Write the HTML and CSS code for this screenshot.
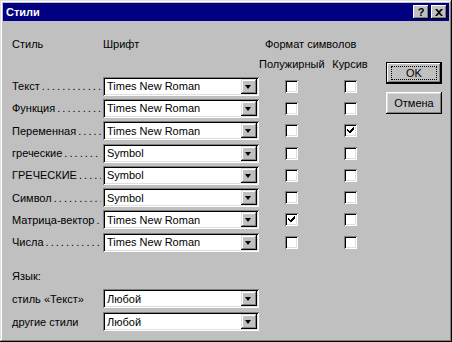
FILE: index.html
```html
<!DOCTYPE html>
<html lang="ru">
<head>
    <meta charset="UTF-8">
    <title>Стили</title>
    <link rel="stylesheet" href="styles.css">
</head>
<body>
<div class="window">
    <div class="titlebar">
        <span class="title">Стили</span>
        <div class="tbtns">
            <span class="tbtn help">?</span>
            <span class="tbtn close">
                <svg width="8" height="7" viewBox="0 0 8 7"><path d="M0 0h2l2 2 2-2h2L5 3.5 8 7H6L4 5 2 7H0l3-3.5z" fill="#000"/></svg>
            </span>
        </div>
    </div>

    <div class="content">
        <div class="form">
            <div class="grid">
                <div class="hd">Стиль</div>
                <div class="hd">Шрифт</div>
                <div class="hd fmt">Формат символов</div>

                <div></div><div></div>
                <div class="hd2">Полужирный</div>
                <div class="hd2">Курсив</div>

                <div class="lbl"><span>Текст</span><span class="dots"></span></div>
                <div class="combo"><span class="val">Times New Roman</span><span class="drop"></span></div>
                <div class="cell"><span class="chk"></span></div>
                <div class="cell"><span class="chk"></span></div>

                <div class="lbl"><span>Функция</span><span class="dots"></span></div>
                <div class="combo"><span class="val">Times New Roman</span><span class="drop"></span></div>
                <div class="cell"><span class="chk"></span></div>
                <div class="cell"><span class="chk"></span></div>

                <div class="lbl"><span>Переменная</span><span class="dots"></span></div>
                <div class="combo"><span class="val">Times New Roman</span><span class="drop"></span></div>
                <div class="cell"><span class="chk"></span></div>
                <div class="cell"><span class="chk on"></span></div>

                <div class="lbl"><span>греческие</span><span class="dots"></span></div>
                <div class="combo"><span class="val">Symbol</span><span class="drop"></span></div>
                <div class="cell"><span class="chk"></span></div>
                <div class="cell"><span class="chk"></span></div>

                <div class="lbl"><span>ГРЕЧЕСКИЕ</span><span class="dots"></span></div>
                <div class="combo"><span class="val">Symbol</span><span class="drop"></span></div>
                <div class="cell"><span class="chk"></span></div>
                <div class="cell"><span class="chk"></span></div>

                <div class="lbl"><span>Символ</span><span class="dots"></span></div>
                <div class="combo"><span class="val">Symbol</span><span class="drop"></span></div>
                <div class="cell"><span class="chk"></span></div>
                <div class="cell"><span class="chk"></span></div>

                <div class="lbl"><span>Матрица-вектор</span><span class="dots"></span></div>
                <div class="combo"><span class="val">Times New Roman</span><span class="drop"></span></div>
                <div class="cell"><span class="chk on"></span></div>
                <div class="cell"><span class="chk"></span></div>

                <div class="lbl"><span>Числа</span><span class="dots"></span></div>
                <div class="combo"><span class="val">Times New Roman</span><span class="drop"></span></div>
                <div class="cell"><span class="chk"></span></div>
                <div class="cell"><span class="chk"></span></div>
            </div>

            <div class="lang">
                <div class="hd lang-title">Язык:</div>
                <div class="lang-row">
                    <div class="lbl2">стиль «Текст»</div>
                    <div class="combo"><span class="val">Любой</span><span class="drop"></span></div>
                </div>
                <div class="lang-row">
                    <div class="lbl2">другие стили</div>
                    <div class="combo"><span class="val">Любой</span><span class="drop"></span></div>
                </div>
            </div>
        </div>

        <div class="buttons">
            <div class="btn default"><span class="focus">OK</span></div>
            <div class="btn">Отмена</div>
        </div>
    </div>
</div>
</body>
</html>
```

FILE: styles.css
```css
    body {
        margin: 0;
        background: #c0c0c0;
        font-family: "Liberation Sans", Arial, sans-serif;
        font-size: 11px;
        color: #000;
    }

    .window {
        width: 452px;
        height: 342px;
        box-sizing: border-box;
        background: #c0c0c0;
        padding: 3px;
        box-shadow: inset -1px -1px #000, inset 1px 1px #dfdfdf, inset -2px -2px #808080, inset 2px 2px #fff;
    }

    .titlebar {
        height: 18px;
        background: #000080;
        display: flex;
        align-items: center;
        justify-content: space-between;
        padding: 0 2px 0 3px;
    }

    .title {
        color: #fff;
        font-weight: bold;
        font-size: 11px;
    }

    .tbtns {
        display: flex;
        gap: 2px;
    }

    .tbtn {
        width: 16px;
        height: 14px;
        box-sizing: border-box;
        background: #c0c0c0;
        box-shadow: inset -1px -1px #000, inset 1px 1px #fff, inset -2px -2px #808080;
        display: flex;
        align-items: center;
        justify-content: center;
        font-weight: bold;
        font-size: 11px;
        line-height: 1;
    }

    .content {
        display: flex;
        padding: 15px 0 0 9px;
    }

    .form {
        width: 374px;
    }

    .grid {
        display: grid;
        grid-template-columns: 91px 156px 64px 54px;
        grid-auto-rows: 22.3px;
        grid-template-rows: 18px 21px;
        align-items: center;
    }

    .hd {
        align-self: start;
        padding-top: 2px;
    }

    .fmt {
        grid-column: 3 / span 2;
        padding-left: 6px;
    }

    .hd2 {
        text-align: center;
        align-self: start;
        padding-top: 4px;
    }

    .lbl {
        display: flex;
        overflow: hidden;
        white-space: nowrap;
        padding-right: 2px;
    }

    .dots {
        flex: 1;
        overflow: hidden;
        margin-left: 2px;
    }

    .dots::after {
        content: ". . . . . . . . . . . . . . . . . . . . . . . .";
        letter-spacing: -0.5px;
    }

    .combo {
        height: 19px;
        box-sizing: border-box;
        background: #fff;
        box-shadow: inset 1px 1px #808080, inset -1px -1px #fff, inset 2px 2px #000, inset -2px -2px #dfdfdf;
        display: flex;
        align-items: center;
        padding: 2px;
        width: 156px;
    }

    .val {
        flex: 1;
        padding-left: 2px;
        font-size: 11px;
    }

    .drop {
        width: 16px;
        height: 15px;
        box-sizing: border-box;
        background: #c0c0c0;
        box-shadow: inset -1px -1px #000, inset 1px 1px #dfdfdf, inset -2px -2px #808080, inset 2px 2px #fff;
        position: relative;
    }

    .drop::after {
        content: "";
        position: absolute;
        left: 4px;
        top: 6px;
        border-left: 3.5px solid transparent;
        border-right: 3.5px solid transparent;
        border-top: 4px solid #000;
    }

    .cell {
        display: flex;
        justify-content: center;
    }

    .chk {
        width: 13px;
        height: 13px;
        box-sizing: border-box;
        background: #fff;
        box-shadow: inset 1px 1px #808080, inset -1px -1px #fff, inset 2px 2px #000, inset -2px -2px #dfdfdf;
        position: relative;
    }

    .chk.on::after {
        content: "";
        position: absolute;
        left: 3px;
        top: 3px;
        width: 7px;
        height: 6px;
        background: no-repeat url("data:image/svg+xml;utf8,<svg xmlns='http://www.w3.org/2000/svg' width='7' height='6'><path d='M0 2h1v1h1v1h1V3h1V2h1V1h1V0h1v3H6v1H5v1H4v1H2V5H1V4H0z' fill='black'/></svg>");
    }

    .lang {
        margin-top: 15px;
    }

    .lang-title {
        height: 15px;
    }

    .lang-row {
        display: flex;
        align-items: center;
        margin-top: 4px;
    }

    .lbl2 {
        width: 91px;
    }

    .buttons {
        display: flex;
        flex-direction: column;
        gap: 8px;
        padding-top: 26px;
    }

    .btn {
        width: 56px;
        height: 22px;
        box-sizing: border-box;
        background: #c0c0c0;
        box-shadow: inset -1px -1px #000, inset 1px 1px #fff, inset -2px -2px #808080, inset 2px 2px #dfdfdf;
        display: flex;
        align-items: center;
        justify-content: center;
    }

    .btn.default {
        box-shadow: inset 0 0 0 1px #000, inset -2px -2px #000, inset 2px 2px #fff, inset -3px -3px #808080;
    }

    .focus {
        width: 46px;
        height: 14px;
        border: 1px dotted #000;
        box-sizing: border-box;
        display: flex;
        align-items: center;
        justify-content: center;
    }
```
